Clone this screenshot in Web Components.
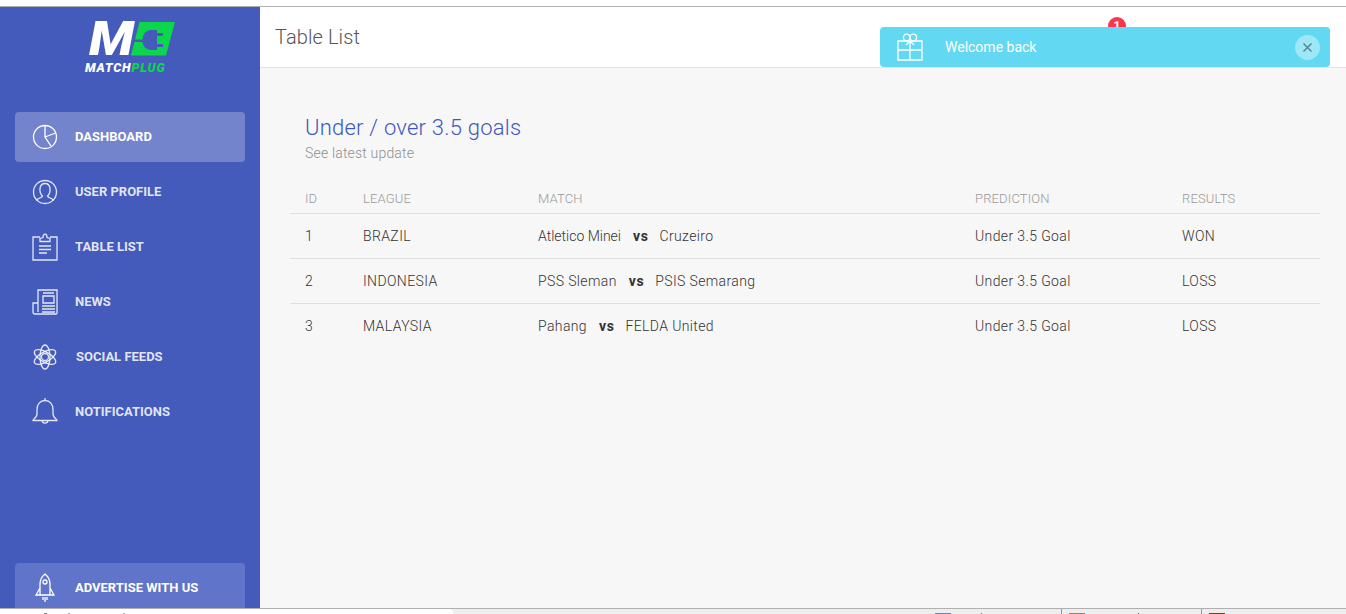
<!DOCTYPE html>
<html>
<head>
<meta charset="utf-8">
<title>Table List</title>
<style>
  html, body { margin: 0; height: 100%; overflow: hidden; background: #fff; }
  body { font-family: Roboto, "Liberation Sans", sans-serif; }
  mp-app { height: 614px; }
</style>
</head>
<body>
<mp-app>
  <mp-sidebar slot="sidebar">
    <mp-logo slot="logo"></mp-logo>
    <mp-nav-item icon="chart" active>DASHBOARD</mp-nav-item>
    <mp-nav-item icon="user">USER PROFILE</mp-nav-item>
    <mp-nav-item icon="clipboard">TABLE LIST</mp-nav-item>
    <mp-nav-item icon="news">NEWS</mp-nav-item>
    <mp-nav-item icon="atom" nudge>SOCIAL FEEDS</mp-nav-item>
    <mp-nav-item icon="bell">NOTIFICATIONS</mp-nav-item>
    <mp-nav-item slot="bottom" icon="rocket" promo>ADVERTISE WITH US</mp-nav-item>
  </mp-sidebar>
  <mp-header slot="header" title="Table List"></mp-header>
  <mp-card slot="main" heading="Under / over 3.5 goals" sub="See latest update">
    <mp-table></mp-table>
  </mp-card>
  <mp-taskbar slot="taskbar"></mp-taskbar>
</mp-app>

<script>
const icons = {
  chart: `<circle cx="15" cy="15" r="11.5"/><path d="M15 3.5V15l6 9M15 15l10.500-4"/>`,
  user: `<circle cx="15" cy="15" r="11.5"/><path d="M6.500 23.500c1-2.500 5.500-2.500 6-4.500-3.500-3-4-12.500 2.500-12.500s6 9.500 2.500 12.500c.5 2 5 2 6 4.500"/>`,
  clipboard: `<path d="M10 5H3v23h24V5h-7M10 9.500V6.500l3-1c0-4.500 4-4.500 4 0l3 1v3zM9 14h12M9 17.500h12M9 21h8"/>`,
  news: `<path d="M8 16V3h19v23a1 1 0 0 1-1 1H5a2 2 0 0 1-2-2v-9zM8 25V16M13 9h11v7H13zM12 19h13M12 22h13M12 25h13M13 6h11"/>`,
  atom: `<circle cx="15" cy="15" r="3.500"/><ellipse cx="15" cy="15" rx="5" ry="12"/><ellipse cx="15" cy="15" rx="5" ry="12" transform="rotate(60 15 15)"/><ellipse cx="15" cy="15" rx="5" ry="12" transform="rotate(-60 15 15)"/>`,
  bell: `<path d="M15 1v2.500M15 3.500c-5 0-8 4-8 9v4c0 3-1 4-3 5.500-1 .6-1 1-1 1.500h24c0-.5 0-.9-1-1.500-2-1.500-3-2.500-3-5.500v-4c0-5-3-9-8-9zM12 23.500c.5 3.500 5.500 3.500 6 0"/>`,
  rocket: `<path d="M15 1c-3 2.500-5 6-5 10v11h10V11c0-4-2-7.500-5-10zM10 15l-4 7h4M20 15l4 7h-4M13 24v3M15 24v5M17 24v3"/><circle cx="15" cy="9" r="2"/>`,
  gift: `<path d="M3 9h24v19H3zM3 18h24M15 9v19M15 9l-4 4M15 9l4 4"/><circle cx="11.700" cy="5.500" r="3.300"/><circle cx="18.300" cy="5.500" r="3.300"/>`
};

class MpApp extends HTMLElement {
  constructor() {
    super();
    this.attachShadow({ mode: "open" }).innerHTML = `
      <style>
        :host { display: flex; flex-direction: column; }
        .edge { height: 6px; background: #fff; border-bottom: 1px solid #b0b0b0; flex: none; }
        .app { flex: 1; min-height: 0; display: flex; }
        .content { flex: 1; min-width: 0; display: flex; flex-direction: column; background: #f7f7f7; }
      </style>
      <div class="edge"></div>
      <div class="app">
        <slot name="sidebar"></slot>
        <div class="content">
          <slot name="header"></slot>
          <slot name="main"></slot>
        </div>
      </div>
      <slot name="taskbar"></slot>
    `;
  }
}

class MpSidebar extends HTMLElement {
  constructor() {
    super();
    this.attachShadow({ mode: "open" }).innerHTML = `
      <style>
        :host { display: flex; flex-direction: column; flex: none; width: 260px; background: #445bbc; overflow: hidden; }
        nav { display: flex; flex-direction: column; gap: 5px; padding: 0 15px; }
        .bottom { margin-top: auto; margin-bottom: -5px; padding: 0 15px; }
      </style>
      <slot name="logo"></slot>
      <nav><slot></slot></nav>
      <div class="bottom"><slot name="bottom"></slot></div>
    `;
  }
}

class MpLogo extends HTMLElement {
  constructor() {
    super();
    this.attachShadow({ mode: "open" }).innerHTML = `
      <style>
        :host { display: block; height: 105px; }
        .wrap { position: relative; width: 100px; margin: 0 auto; height: 105px; left: 1px; }
        svg { position: absolute; left: 49px; top: 15px; }
        .m { position: absolute; left: 8px; top: 14px; font: italic 900 48px/36px Roboto, sans-serif; color: #fff; transform: scaleX(1.100); transform-origin: left; }
        .name { position: absolute; left: 4px; top: 54px; font: italic 900 12.500px/14px Roboto, sans-serif; letter-spacing: .85px; color: #fff; white-space: nowrap; }
        .name b { color: #0cd64b; font-weight: 900; }
      </style>
      <div class="wrap">
        <svg width="46" height="34" viewBox="0 0 46 34">
          <path fill="#0cd64b" d="M9.500 0H45L36 33.500H1z"/>
          <path fill="#445bbc" d="M21 8h6v3h6v3h-6v8h6v3h-6v3h-6c-5 0-8-4-8.500-8H3v-2.500h9.500C13 12 16 8 21 8z"/>
        </svg>
        <span class="m">M</span>
        <span class="name">MATCH<b>PLUG</b></span>
      </div>
    `;
  }
}

class MpNavItem extends HTMLElement {
  constructor() {
    super();
    const icon = icons[this.getAttribute("icon")] || "";
    this.attachShadow({ mode: "open" }).innerHTML = `
      <style>
        :host { display: block; color: rgba(255,255,255,.85); }
        :host([active]) { color: #fff; }
        :host([promo]) { color: #fff; }
        a { display: flex; align-items: center; height: 50px; padding-left: 15px; gap: 15px; border-radius: 4px; font: 700 13px/14px Roboto, sans-serif; }
        :host([active]) a { background: #7384cd; }
        :host([promo]) a { background: #6074c9; }
        :host([nudge]) span { margin-left: 1px; }
        svg { width: 30px; height: 30px; fill: none; stroke: currentColor; stroke-width: 1.300; flex: none; }
      </style>
      <a><svg viewBox="0 0 30 30">${icon}</svg><span><slot></slot></span></a>
    `;
  }
}

class MpHeader extends HTMLElement {
  constructor() {
    super();
    this.attachShadow({ mode: "open" }).innerHTML = `
      <style>
        :host { display: block; position: relative; flex: none; height: 61px; box-sizing: border-box; background: #fff; border-bottom: 1px solid #e4e4e4; }
        h1 { margin: 0; padding: 17px 15px 0; font: 300 20px/26px Roboto, sans-serif; letter-spacing: .1px; color: #555; }
        .badge { position: absolute; left: 848px; top: 10px; width: 18px; height: 18px; border-radius: 50%; background: #f9364c; color: #fff; font: 700 12px/18px Roboto, sans-serif; text-align: center; }
        mp-toast { position: absolute; left: 620px; top: 20px; }
      </style>
      <h1>${this.getAttribute("title")}</h1>
      <span class="badge">1</span>
      <mp-toast>Welcome back</mp-toast>
    `;
  }
}

class MpToast extends HTMLElement {
  constructor() {
    super();
    this.attachShadow({ mode: "open" }).innerHTML = `
      <style>
        :host { display: flex; align-items: center; width: 450px; height: 40px; box-sizing: border-box; padding: 0 10px 0 15px; gap: 20px; border-radius: 4px; background: #63d8f3; color: #fff; font: 400 14px/20px Roboto, sans-serif; }
        svg { width: 30px; height: 30px; fill: none; stroke: #fff; stroke-width: 1.300; flex: none; }
        .text { flex: 1; }
        button { width: 25px; height: 25px; padding: 0; border: 0; border-radius: 50%; background: #9de7f7; display: flex; align-items: center; justify-content: center; }
        button svg { width: 11px; height: 11px; stroke: #4a8392; stroke-width: 1.300; }
      </style>
      <svg viewBox="0 0 30 30">${icons.gift}</svg>
      <span class="text"><slot></slot></span>
      <button><svg viewBox="0 0 11 11"><path d="M1.500 1.500l8 8M9.500 1.500l-8 8"/></svg></button>
    `;
  }
}

class MpCard extends HTMLElement {
  constructor() {
    super();
    this.attachShadow({ mode: "open" }).innerHTML = `
      <style>
        :host { display: block; padding: 45px 26px 0 30px; }
        h2 { margin: 0 0 0 15px; font: 300 22px/30px Roboto, sans-serif; letter-spacing: .23px; color: #4058bd; }
        p { margin: 0 0 21px 15px; font: 300 14px/20px Roboto, sans-serif; letter-spacing: .18px; color: #8f8f8f; }
      </style>
      <h2>${this.getAttribute("heading")}</h2>
      <p>${this.getAttribute("sub")}</p>
      <slot></slot>
    `;
  }
}

const rows = [
  ["1", "BRAZIL", "<span class=\"tight\">Atletico Minei</span>", "Cruzeiro", "Under 3.5 Goal", "WON"],
  ["2", "INDONESIA", "PSS Sleman", "PSIS Semarang", "Under 3.5 Goal", "LOSS"],
  ["3", "MALAYSIA", "Pahang", "FELDA United", "Under 3.5 Goal", "LOSS"]
];

class MpTable extends HTMLElement {
  constructor() {
    super();
    const body = rows.map(r => `
      <div class="row">
        <span>${r[0]}</span><span>${r[1]}</span>
        <span>${r[2]}<b>vs</b>${r[3]}</span>
        <span>${r[4]}</span><span>${r[5]}</span>
      </div>`).join("");
    this.attachShadow({ mode: "open" }).innerHTML = `
      <style>
        :host { display: block; }
        .row { display: grid; grid-template-columns: 58px 175px 437px 207px 1fr; padding-left: 15px; height: 45px; box-sizing: border-box; align-items: center; border-bottom: 1px solid #dfdfdf; font: 300 14px/20px Roboto, sans-serif; letter-spacing: .38px; color: #333; }
        .row:last-child { border-bottom-color: transparent; }
        .head { height: 30px; font-size: 13px; letter-spacing: .15px; color: #9a9a9a; }
        b { font-weight: 700; margin: 0 11px 0 12px; letter-spacing: .6px; }
        .tight { letter-spacing: 0; }
      </style>
      <div class="row head"><span>ID</span><span>LEAGUE</span><span>MATCH</span><span>PREDICTION</span><span>RESULTS</span></div>
      ${body}
    `;
  }
}

class MpTaskbar extends HTMLElement {
  constructor() {
    super();
    const bit = (w, c, ml) => `<i style="width:${w}px;background:${c};margin-left:${ml}px"></i>`;
    this.attachShadow({ mode: "open" }).innerHTML = `
      <style>
        :host { display: flex; flex: none; height: 6px; box-sizing: border-box; background: #eee; border-top: 1px solid #b0b0b0; overflow: hidden; }
        .tab { display: flex; width: 453px; background: #fff; border-radius: 0 4px 0 0; flex: none; }
        .sp { display: flex; width: 608px; flex: none; }
        .seg { display: flex; border-left: 1px solid #9a9a9a; box-sizing: border-box; width: 140px; flex: none; }
        i { display: block; height: 1px; margin-top: 4px; }
      </style>
      <div class="tab">${bit(3, "#888", 44)}${bit(2, "#aaa", 21)}${bit(2, "#aaa", 53)}</div>
      <div class="sp">${bit(16, "#6f7fc0", 482)}${bit(1, "#777", 30)}</div>
      <div class="seg">${bit(16, "#d0703c", 7)}${bit(1, "#555", 53)}</div>
      <div class="seg">${bit(16, "#c01818", 7)}</div>
    `;
  }
}

customElements.define("mp-app", MpApp);
customElements.define("mp-sidebar", MpSidebar);
customElements.define("mp-logo", MpLogo);
customElements.define("mp-nav-item", MpNavItem);
customElements.define("mp-header", MpHeader);
customElements.define("mp-toast", MpToast);
customElements.define("mp-card", MpCard);
customElements.define("mp-table", MpTable);
customElements.define("mp-taskbar", MpTaskbar);
</script>
</body>
</html>
